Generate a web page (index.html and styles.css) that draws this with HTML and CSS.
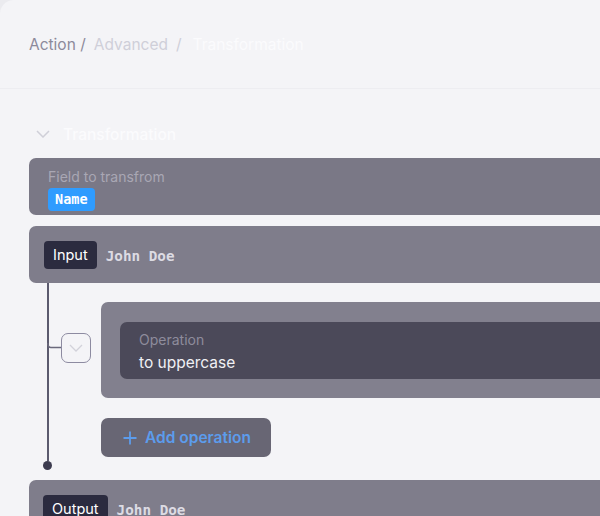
FILE: index.html
```html
<!DOCTYPE html>
<html>
<head>
<meta charset="utf-8">
<link rel="stylesheet" href="styles.css">
</head>
<body>
<div class="panel">
  <div class="header">
    <span class="crumb c1">Action /</span>
    <span class="crumb c2">Advanced</span>
    <span class="crumb c2">/</span>
    <span class="crumb c3">Transformation</span>
  </div>
  <div class="section">
    <div class="section-title">
      <svg class="chev" width="14" height="8" viewBox="0 0 14 8"><path d="M1 1 L7 7 L13 1" fill="none" stroke="#cfcfd8" stroke-width="1.5"/></svg>
      <span>Transformation</span>
    </div>
    <div class="card field">
      <div class="field-label">Field to transfrom</div>
      <span class="tag">Name</span>
    </div>
    <div class="card io">
      <span class="badge">Input</span>
      <span class="mono">John Doe</span>
    </div>
    <div class="tree">
      <div class="rail"><div class="line"></div><div class="dot"></div></div>
      <div class="branch">
        <svg class="conn" width="14" height="6" viewBox="0 0 14 6"><path d="M0.75 0 Q0.75 4.5 4 4.5 H14" fill="none" stroke="#6a697c" stroke-width="1.5"/></svg>
        <div class="toggle">
          <svg width="14" height="8" viewBox="0 0 14 8"><path d="M1 1 L7 7 L13 1" fill="none" stroke="#d2d2da" stroke-width="1.3"/></svg>
        </div>
      </div>
      <div class="op">
        <div class="op-inner">
          <div class="op-label">Operation</div>
          <div class="op-value">to uppercase</div>
        </div>
      </div>
      <div class="add">
        <svg width="14" height="14" viewBox="0 0 14 14"><path d="M7 0.5 V13.5 M0.5 7 H13.5" stroke="#5c9cec" stroke-width="1.8"/></svg>
        <span>Add operation</span>
      </div>
    </div>
    <div class="card io out">
      <span class="badge">Output</span>
      <span class="mono">John Doe</span>
    </div>
  </div>
</div>
</body>
</html>
```
FILE: styles.css
```css
html, body {
  margin: 0;
  padding: 0;
  overflow: hidden;
  background: #ebebef;
  font-family: Inter, "Noto Sans", sans-serif;
}
.panel {
  width: 780px;
  height: 540px;
  background: #f4f4f7;
  border-top-left-radius: 14px;
  overflow: hidden;
}
.header {
  height: 89px;
  box-sizing: border-box;
  border-bottom: 1px solid #ededf1;
  display: flex;
  align-items: center;
  padding: 2px 0 0 29px;
  gap: 5px;
  font-size: 15.5px;
}
.crumb { line-height: 20px; }
.c1 { color: #8c8a9b; }
.c2 { color: #cfcfd9; margin-left: 3px; }
.c3 { color: #fbfbfd; margin-left: 6px; }
.section {
  padding-left: 29px;
}
.section-title {
  display: flex;
  align-items: center;
  height: 22px;
  margin-top: 34px;
  margin-bottom: 13px;
  color: #fbfbfd;
  font-size: 15.5px;
  font-weight: 500;
}
.chev { margin-left: 7px; margin-right: 13px; }
.card {
  border-radius: 7px;
  box-sizing: border-box;
}
.field {
  background: #7a7886;
  height: 57px;
  padding: 9px 19px 0;
}
.field-label {
  color: #a9a7b4;
  font-size: 14px;
  line-height: 19px;
}
.tag {
  display: inline-block;
  margin-top: 2px;
  background: #2f9cff;
  color: #ffffff;
  font-family: "DejaVu Sans Mono", monospace;
  font-weight: bold;
  font-size: 13.5px;
  line-height: 23px;
  padding: 0 7px;
  border-radius: 4px;
}
.io {
  background: #7f7d8b;
  height: 57px;
  margin-top: 11px;
  padding: 0 15px;
  display: flex;
  align-items: center;
}
.badge {
  background: #2b2b3f;
  color: #ffffff;
  font-size: 14.5px;
  line-height: 28px;
  padding: 0 9px;
  border-radius: 4px;
}
.mono {
  margin-left: 9px;
  margin-top: 3px;
  color: #dcdbe3;
  font-family: "DejaVu Sans Mono", monospace;
  font-size: 14.3px;
  font-weight: 600;
}
.tree {
  display: grid;
  grid-template-columns: 72px 1fr;
  grid-template-rows: auto auto;
}
.rail {
  grid-column: 1;
  grid-row: 1 / span 2;
  display: flex;
  flex-direction: column;
  align-items: flex-start;
  padding-left: 18px;
  margin-bottom: 10px;
}
.line {
  flex: 1;
  width: 1.5px;
  background: #5b5a6e;
}
.dot {
  width: 9px;
  height: 9px;
  border-radius: 50%;
  background: #3c3b4f;
  margin-left: -3.75px;
}
.branch {
  grid-column: 1;
  grid-row: 1;
  align-self: start;
  margin-top: 50px;
  margin-left: 18px;
  display: flex;
  align-items: flex-start;
}
.conn { margin-top: 10px; }
.toggle {
  width: 30px;
  height: 30px;
  box-sizing: border-box;
  border: 1.5px solid #8d8ba1;
  border-radius: 7px;
  background: #f4f4f7;
  display: flex;
  align-items: center;
  justify-content: center;
}
.op {
  grid-column: 2;
  grid-row: 1;
  margin-top: 19px;
  height: 96px;
  box-sizing: border-box;
  background: #82808e;
  border-radius: 7px 0 0 7px;
  padding: 20px 0 0 19px;
}
.op-inner {
  background: #4b4959;
  border-radius: 7px 0 0 7px;
  height: 57px;
  box-sizing: border-box;
  padding: 8px 19px;
}
.op-label {
  color: #8e8c9c;
  font-size: 14px;
  line-height: 19px;
}
.op-value {
  color: #f0f0f4;
  font-size: 15.5px;
  line-height: 21px;
  margin-top: 3px;
}
.add {
  grid-column: 2;
  grid-row: 2;
  justify-self: start;
  margin-top: 20px;
  margin-bottom: 23px;
  width: 170px;
  height: 39px;
  box-sizing: border-box;
  background: #686674;
  border-radius: 7px;
  display: flex;
  align-items: center;
  padding-left: 22px;
  gap: 8px;
  color: #5c9cec;
  font-size: 15.5px;
  font-weight: 600;
}
.out {
  margin-top: 0;
  padding-left: 14px;
  border-radius: 7px 0 0 0;
}
```
